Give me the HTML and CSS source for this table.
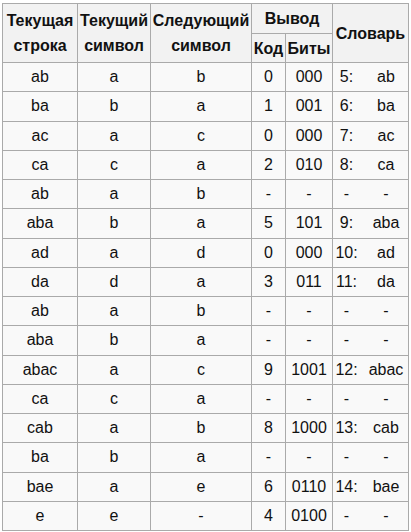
FILE: index.html
```html
<!DOCTYPE html>
<html lang="ru">
<head>
<meta charset="utf-8">
<link rel="stylesheet" href="styles.css">
</head>
<body>
<table class="lzw">
  <colgroup>
    <col class="c1"><col class="c2"><col class="c3"><col class="c4"><col class="c5"><col class="c6">
  </colgroup>
  <thead>
    <tr class="h1">
      <th rowspan="2">Текущая<br>строка</th>
      <th rowspan="2">Текущий<br>символ</th>
      <th rowspan="2">Следующий<br>символ</th>
      <th colspan="2">Вывод</th>
      <th rowspan="2">Словарь</th>
    </tr>
    <tr class="h2">
      <th>Код</th>
      <th>Биты</th>
    </tr>
  </thead>
  <tbody>
    <tr><td>ab</td><td>a</td><td>b</td><td>0</td><td>000</td><td class="d"><div class="dict"><span class="k">5:</span><span class="v">ab</span></div></td></tr>
    <tr><td>ba</td><td>b</td><td>a</td><td>1</td><td>001</td><td class="d"><div class="dict"><span class="k">6:</span><span class="v">ba</span></div></td></tr>
    <tr><td>ac</td><td>a</td><td>c</td><td>0</td><td>000</td><td class="d"><div class="dict"><span class="k">7:</span><span class="v">ac</span></div></td></tr>
    <tr><td>ca</td><td>c</td><td>a</td><td>2</td><td>010</td><td class="d"><div class="dict"><span class="k">8:</span><span class="v">ca</span></div></td></tr>
    <tr><td>ab</td><td>a</td><td>b</td><td>-</td><td>-</td><td class="d"><div class="dict"><span class="k">-</span><span class="v">-</span></div></td></tr>
    <tr><td>aba</td><td>b</td><td>a</td><td>5</td><td>101</td><td class="d"><div class="dict"><span class="k">9:</span><span class="v">aba</span></div></td></tr>
    <tr><td>ad</td><td>a</td><td>d</td><td>0</td><td>000</td><td class="d"><div class="dict"><span class="k">10:</span><span class="v">ad</span></div></td></tr>
    <tr><td>da</td><td>d</td><td>a</td><td>3</td><td>011</td><td class="d"><div class="dict"><span class="k">11:</span><span class="v">da</span></div></td></tr>
    <tr><td>ab</td><td>a</td><td>b</td><td>-</td><td>-</td><td class="d"><div class="dict"><span class="k">-</span><span class="v">-</span></div></td></tr>
    <tr><td>aba</td><td>b</td><td>a</td><td>-</td><td>-</td><td class="d"><div class="dict"><span class="k">-</span><span class="v">-</span></div></td></tr>
    <tr><td>abac</td><td>a</td><td>c</td><td>9</td><td>1001</td><td class="d"><div class="dict"><span class="k">12:</span><span class="v">abac</span></div></td></tr>
    <tr><td>ca</td><td>c</td><td>a</td><td>-</td><td>-</td><td class="d"><div class="dict"><span class="k">-</span><span class="v">-</span></div></td></tr>
    <tr><td>cab</td><td>a</td><td>b</td><td>8</td><td>1000</td><td class="d"><div class="dict"><span class="k">13:</span><span class="v">cab</span></div></td></tr>
    <tr><td>ba</td><td>b</td><td>a</td><td>-</td><td>-</td><td class="d"><div class="dict"><span class="k">-</span><span class="v">-</span></div></td></tr>
    <tr><td>bae</td><td>a</td><td>e</td><td>6</td><td>0110</td><td class="d"><div class="dict"><span class="k">14:</span><span class="v">bae</span></div></td></tr>
    <tr><td>e</td><td>e</td><td>-</td><td>4</td><td>0100</td><td class="d"><div class="dict"><span class="k">-</span><span class="v">-</span></div></td></tr>
  </tbody>
</table>
</body>
</html>
```

FILE: styles.css
```css
html, body {
  margin: 0;
  padding: 0;
  background: #ffffff;
}

body {
  padding: 3px 0 0 2px;
  font-family: "Liberation Sans", Arial, sans-serif;
  font-size: 16px;
  color: #111;
}

.lzw {
  border-collapse: collapse;
  table-layout: fixed;
  width: 406px;
  background: #f9f9f9;
  border: 1px solid #aaa;
}

.c1 { width: 75px; }
.c2 { width: 73px; }
.c3 { width: 101px; }
.c4 { width: 34px; }
.c5 { width: 47px; }
.c6 { width: 76px; }

.lzw th,
.lzw td {
  border: 1px solid #aaa;
  padding: 0 1px;
  text-align: center;
  vertical-align: middle;
  white-space: nowrap;
}

.lzw th {
  background: #f2f2f2;
  font-weight: bold;
  line-height: 25px;
}

.h1 { height: 30px; }
.h2 { height: 29px; }

.lzw tbody tr { height: 29.25px; }

.lzw td { line-height: 18px; }

.lzw td.d { padding: 0; }

.dict {
  display: flex;
  align-items: center;
}

.dict .k {
  width: 27px;
  text-align: center;
}

.dict .v {
  flex: 1;
  margin-left: 4px;
  text-align: center;
}
```
